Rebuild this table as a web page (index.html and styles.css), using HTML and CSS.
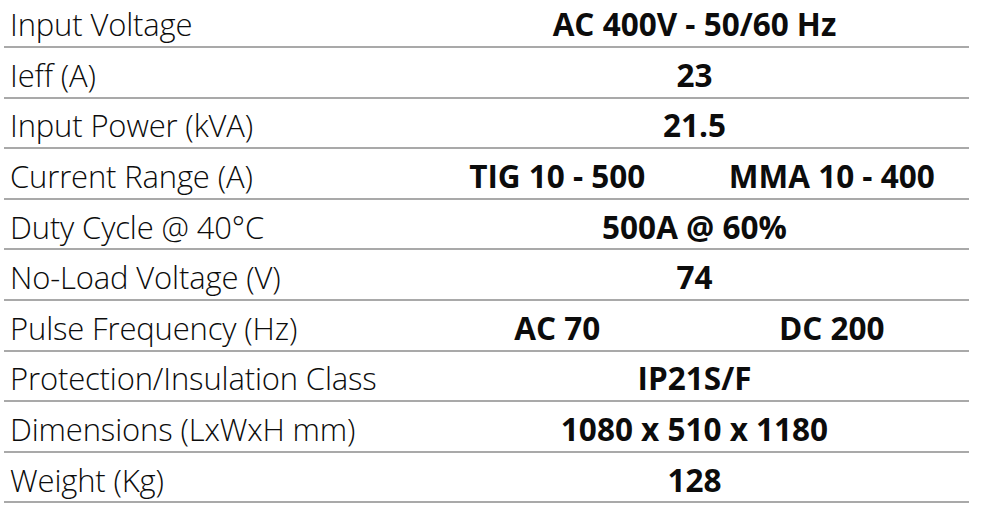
FILE: index.html
```html
<!DOCTYPE html>
<html>
<head>
<meta charset="utf-8">
<link rel="stylesheet" href="styles.css">
</head>
<body>
<div class="specs">
  <div class="row"><div class="label">Input Voltage</div><div class="value">AC 400V - 50/60 Hz</div></div>
  <div class="row"><div class="label">Ieff (A)</div><div class="value">23</div></div>
  <div class="row"><div class="label">Input Power (kVA)</div><div class="value">21.5</div></div>
  <div class="row"><div class="label">Current Range (A)</div><div class="value split"><span>TIG 10 - 500</span><span>MMA 10 - 400</span></div></div>
  <div class="row"><div class="label">Duty Cycle @ 40°C</div><div class="value">500A @ 60%</div></div>
  <div class="row"><div class="label">No-Load Voltage (V)</div><div class="value">74</div></div>
  <div class="row"><div class="label">Pulse Frequency (Hz)</div><div class="value split"><span>AC 70</span><span>DC 200</span></div></div>
  <div class="row"><div class="label">Protection/Insulation Class</div><div class="value">IP21S/F</div></div>
  <div class="row"><div class="label">Dimensions (LxWxH mm)</div><div class="value">1080 x 510 x 1180</div></div>
  <div class="row"><div class="label">Weight (Kg)</div><div class="value">128</div></div>
</div>
</body>
</html>
```
FILE: styles.css
```css
html, body {
  margin: 0;
  padding: 0;
  background: #ffffff;
}
body {
  width: 1000px;
  height: 518px;
  overflow: hidden;
  font-family: "Open Sans", "Noto Sans", sans-serif;
  color: #0c0c0c;
}
.specs {
  margin: -2.6px 0 0 4px;
  width: 965px;
  display: flex;
  flex-direction: column;
}
.row {
  box-sizing: border-box;
  height: 50.6px;
  border-bottom: 2px solid #a9a9a9;
  display: grid;
  grid-template-columns: 416px 1fr;
  align-items: center;
  padding-top: 5px;
}
.label {
  padding-left: 6px;
  font-weight: 300;
  font-size: 31px;
  line-height: 36px;
  letter-spacing: -0.15px;
  white-space: nowrap;
}
.value {
  text-align: center;
  font-weight: 700;
  font-size: 31.5px;
  line-height: 36px;
  white-space: nowrap;
}
.value.split {
  display: grid;
  grid-template-columns: 1fr 1fr;
}
```
